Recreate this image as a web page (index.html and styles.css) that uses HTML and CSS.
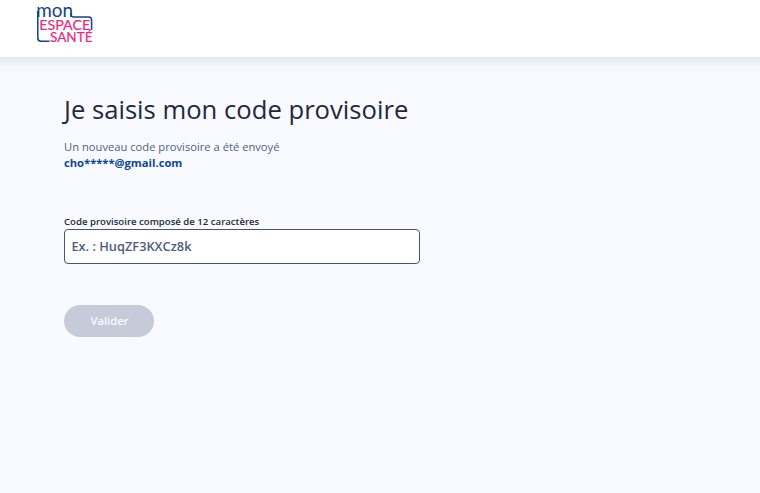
FILE: index.html
```html
<!DOCTYPE html>
<html lang="fr">
<head>
    <meta charset="UTF-8">
    <meta name="viewport" content="width=device-width, initial-scale=1.0">
    <title>Mon espace santé - Code provisoire</title>
    <link rel="stylesheet" href="styles.css">
</head>
<body>
    <header class="header">
        <a href="#" class="logo">
            <svg width="56" height="36" viewBox="0 0 56 36" role="img" aria-label="Mon espace santé">
                <!-- Cadre -->
                <path class="logo-frame" d="M.8 4V31Q.8 34.2 4 34.2H12.5M34.2 6V8Q34.2 10 36.5 10H51.5Q54.6 10 54.6 13V23"/>
                <text class="logo-blue" x="-0.8" y="10.4" textLength="36.8" lengthAdjust="spacingAndGlyphs">mon</text>
                <text class="logo-pink" x="2.2" y="22.6" textLength="51" lengthAdjust="spacingAndGlyphs">ESPACE</text>
                <text class="logo-pink" x="13" y="34.9" textLength="42.6" lengthAdjust="spacingAndGlyphs">SANTÉ</text>
            </svg>
        </a>
    </header>

    <main class="content">
        <h1 class="title">Je saisis mon code provisoire</h1>
        <p class="intro">
            Un nouveau code provisoire a été envoyé<br>
            <strong class="email">cho*****@gmail.com</strong>
        </p>

        <form class="code-form">
            <label class="code-label" for="code">Code provisoire composé de 12 caractères</label>
            <input class="code-input" type="text" id="code" maxlength="12" placeholder="Ex. : HuqZF3KXCz8k">
            <button class="submit-btn" type="submit" disabled>Valider</button>
        </form>
    </main>
</body>
</html>
```

FILE: styles.css
```css
* {
    margin: 0;
    padding: 0;
    box-sizing: border-box;
}

body {
    font-family: 'Open Sans', sans-serif;
    background: #f9faff;
    color: #25283a;
    min-height: 100vh;
}

/* En-tête */
.header {
    height: 57px;
    padding: 7px 37px;
    background: #ffffff;
}

.logo {
    display: block;
    width: 56px;
    height: 36px;
}

.logo svg {
    display: block;
    overflow: visible;
}

.logo-frame {
    fill: none;
    stroke: #12438c;
    stroke-width: 1.5;
}

.logo-blue {
    font-family: 'Lato', sans-serif;
    font-size: 18.5px;
    fill: #12438c;
}

.logo-pink {
    font-family: 'Lato', sans-serif;
    font-size: 12.8px;
    fill: #ea2a80;
    stroke: #ea2a80;
    stroke-width: 0.2;
}

/* Contenu */
.content {
    padding: 35px 0 0 64px;
    background: linear-gradient(#e3e9f4, #f3f6fc 9px, #f9faff 20px);
}

.title {
    font-size: 25.65px;
    font-weight: 400;
    line-height: 36px;
    white-space: nowrap;
}

.intro {
    margin-top: 11px;
    font-size: 11.2px;
    line-height: 16px;
    color: #545f7e;
}

.email {
    font-weight: 700;
    color: #0b4797;
}

.code-form {
    display: flex;
    flex-direction: column;
    align-items: flex-start;
    width: 356px;
    margin-top: 43px;
}

.code-label {
    font-size: 9.6px;
    font-weight: 600;
    line-height: 15px;
}

.code-input {
    width: 100%;
    height: 35px;
    padding: 0 6.4px 2px;
    background: #ffffff;
    border: 1px solid #465573;
    border-radius: 4px;
    font-family: inherit;
    font-size: 12.8px;
    font-weight: 600;
    color: #25283a;
}

.code-input::placeholder {
    color: #4c5d7f;
    opacity: 1;
}

.submit-btn {
    width: 90px;
    height: 32px;
    margin-top: 41px;
    padding: 0 0 1px 1px;
    background: #c5cbd8;
    border: none;
    border-radius: 16px;
    font-family: inherit;
    font-size: 11.2px;
    font-weight: 600;
    color: #f9faff;
}
```
